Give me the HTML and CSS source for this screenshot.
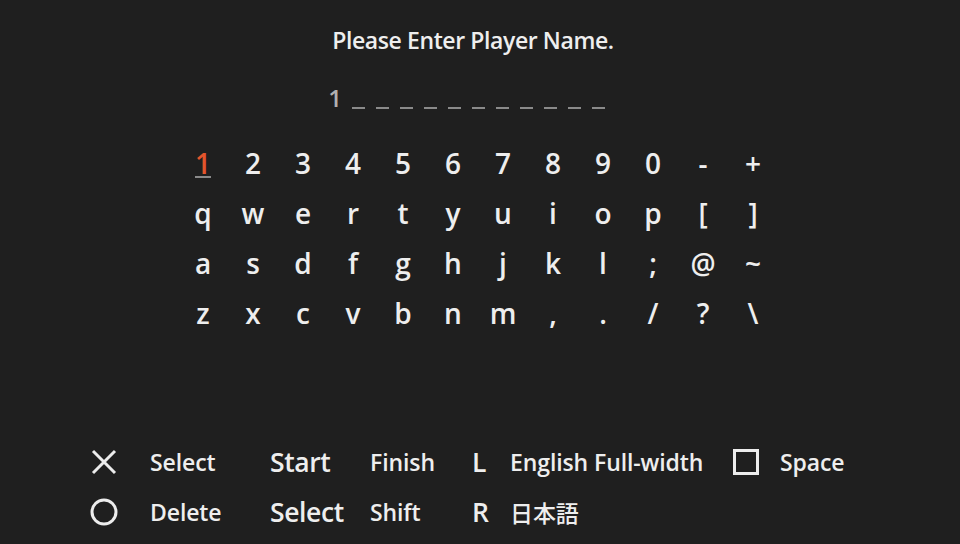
FILE: index.html
```html
<!DOCTYPE html>
<html>
<head>
<meta charset="utf-8">
<link rel="stylesheet" href="styles.css">
</head>
<body>
<div class="screen">
  <div class="title">Please Enter Player Name.</div>
  <div class="entry">
    <span class="slot typed">1</span>
    <span class="slot"></span><span class="slot"></span><span class="slot"></span><span class="slot"></span><span class="slot"></span><span class="slot"></span><span class="slot"></span><span class="slot"></span><span class="slot"></span><span class="slot"></span><span class="slot"></span>
  </div>
  <div class="keys">
    <span class="key active">1</span><span class="key">2</span><span class="key">3</span><span class="key">4</span><span class="key">5</span><span class="key">6</span><span class="key">7</span><span class="key">8</span><span class="key">9</span><span class="key">0</span><span class="key">-</span><span class="key">+</span>
    <span class="key">q</span><span class="key">w</span><span class="key">e</span><span class="key">r</span><span class="key">t</span><span class="key">y</span><span class="key">u</span><span class="key">i</span><span class="key">o</span><span class="key">p</span><span class="key">[</span><span class="key">]</span>
    <span class="key">a</span><span class="key">s</span><span class="key">d</span><span class="key">f</span><span class="key">g</span><span class="key">h</span><span class="key">j</span><span class="key">k</span><span class="key">l</span><span class="key">;</span><span class="key">@</span><span class="key">~</span>
    <span class="key">z</span><span class="key">x</span><span class="key">c</span><span class="key">v</span><span class="key">b</span><span class="key">n</span><span class="key">m</span><span class="key">,</span><span class="key">.</span><span class="key">/</span><span class="key">?</span><span class="key">\</span>
  </div>
  <div class="legend">
    <span class="icon"><svg width="28" height="28" viewBox="0 0 28 28"><path d="M3 3 L25 25 M25 3 L3 25" stroke="#ececec" stroke-width="3" fill="none"/></svg></span>
    <span class="lbl">Select</span>
    <span class="btn">Start</span>
    <span class="lbl">Finish</span>
    <span class="btn">L</span>
    <span class="lbl">English Full-width</span>
    <span class="icon"><svg width="26" height="26" viewBox="0 0 26 26"><rect x="1.5" y="1.5" width="23" height="23" stroke="#ececec" stroke-width="3" fill="none"/></svg></span>
    <span class="lbl">Space</span>

    <span class="icon"><svg width="28" height="28" viewBox="0 0 28 28"><circle cx="14" cy="14" r="12" stroke="#ececec" stroke-width="3" fill="none"/></svg></span>
    <span class="lbl">Delete</span>
    <span class="btn">Select</span>
    <span class="lbl">Shift</span>
    <span class="btn">R</span>
    <span class="lbl cjk">日本語</span>
    <span></span>
    <span></span>
  </div>
</div>
</body>
</html>
```

FILE: styles.css
```css
html, body {
  margin: 0;
  padding: 0;
  background: #1f1f1f;
}
.screen {
  width: 960px;
  height: 544px;
  background: #1f1f1f;
  color: #eeeeee;
  font-family: "Open Sans", "Noto Sans CJK JP", sans-serif;
  font-weight: 600;
  display: flex;
  flex-direction: column;
  overflow: hidden;
}
.title {
  margin-top: 22px;
  height: 36px;
  line-height: 36px;
  font-size: 23px;
  text-align: center;
  letter-spacing: -0.4px;
  padding-right: 14px;
}
.entry {
  margin-top: 22px;
  display: flex;
  padding-left: 328px;
  height: 30px;
  align-items: flex-end;
}
.slot {
  width: 24px;
  height: 24px;
  display: flex;
  justify-content: center;
  align-items: flex-end;
  font-size: 24px;
  line-height: 24px;
  color: #b0b0b0;
}
.slot:not(.typed)::after {
  content: "";
  width: 13px;
  height: 2px;
  background: #8a8a8a;
  margin-bottom: 1px;
}
.typed {
  width: 14px;
  margin-right: 4px;
}
.keys {
  margin-top: 28px;
  margin-left: 178px;
  display: grid;
  grid-template-columns: repeat(12, 50px);
  grid-auto-rows: 50px;
  width: 600px;
}
.key {
  display: flex;
  align-items: center;
  justify-content: center;
  font-size: 28px;
  line-height: 50px;
  position: relative;
}
.key.active {
  color: #e3552c;
}
.key.active::after {
  content: "";
  position: absolute;
  left: 17px;
  bottom: 10px;
  width: 16px;
  height: 2px;
  background: #8a8a8a;
}
.legend {
  margin-top: auto;
  margin-bottom: 7px;
  margin-left: 90px;
  display: grid;
  grid-template-columns: 60px 120px 100px 102px 38px 223px 47px auto;
  grid-auto-rows: 50px;
  align-items: center;
}
.icon {
  display: flex;
  align-items: center;
}
.lbl {
  font-size: 23px;
  letter-spacing: -0.1px;
}
.lbl.cjk {
  font-weight: 500;
  font-size: 23px;
}
.btn {
  font-size: 26.5px;
  letter-spacing: -0.4px;
}
```
